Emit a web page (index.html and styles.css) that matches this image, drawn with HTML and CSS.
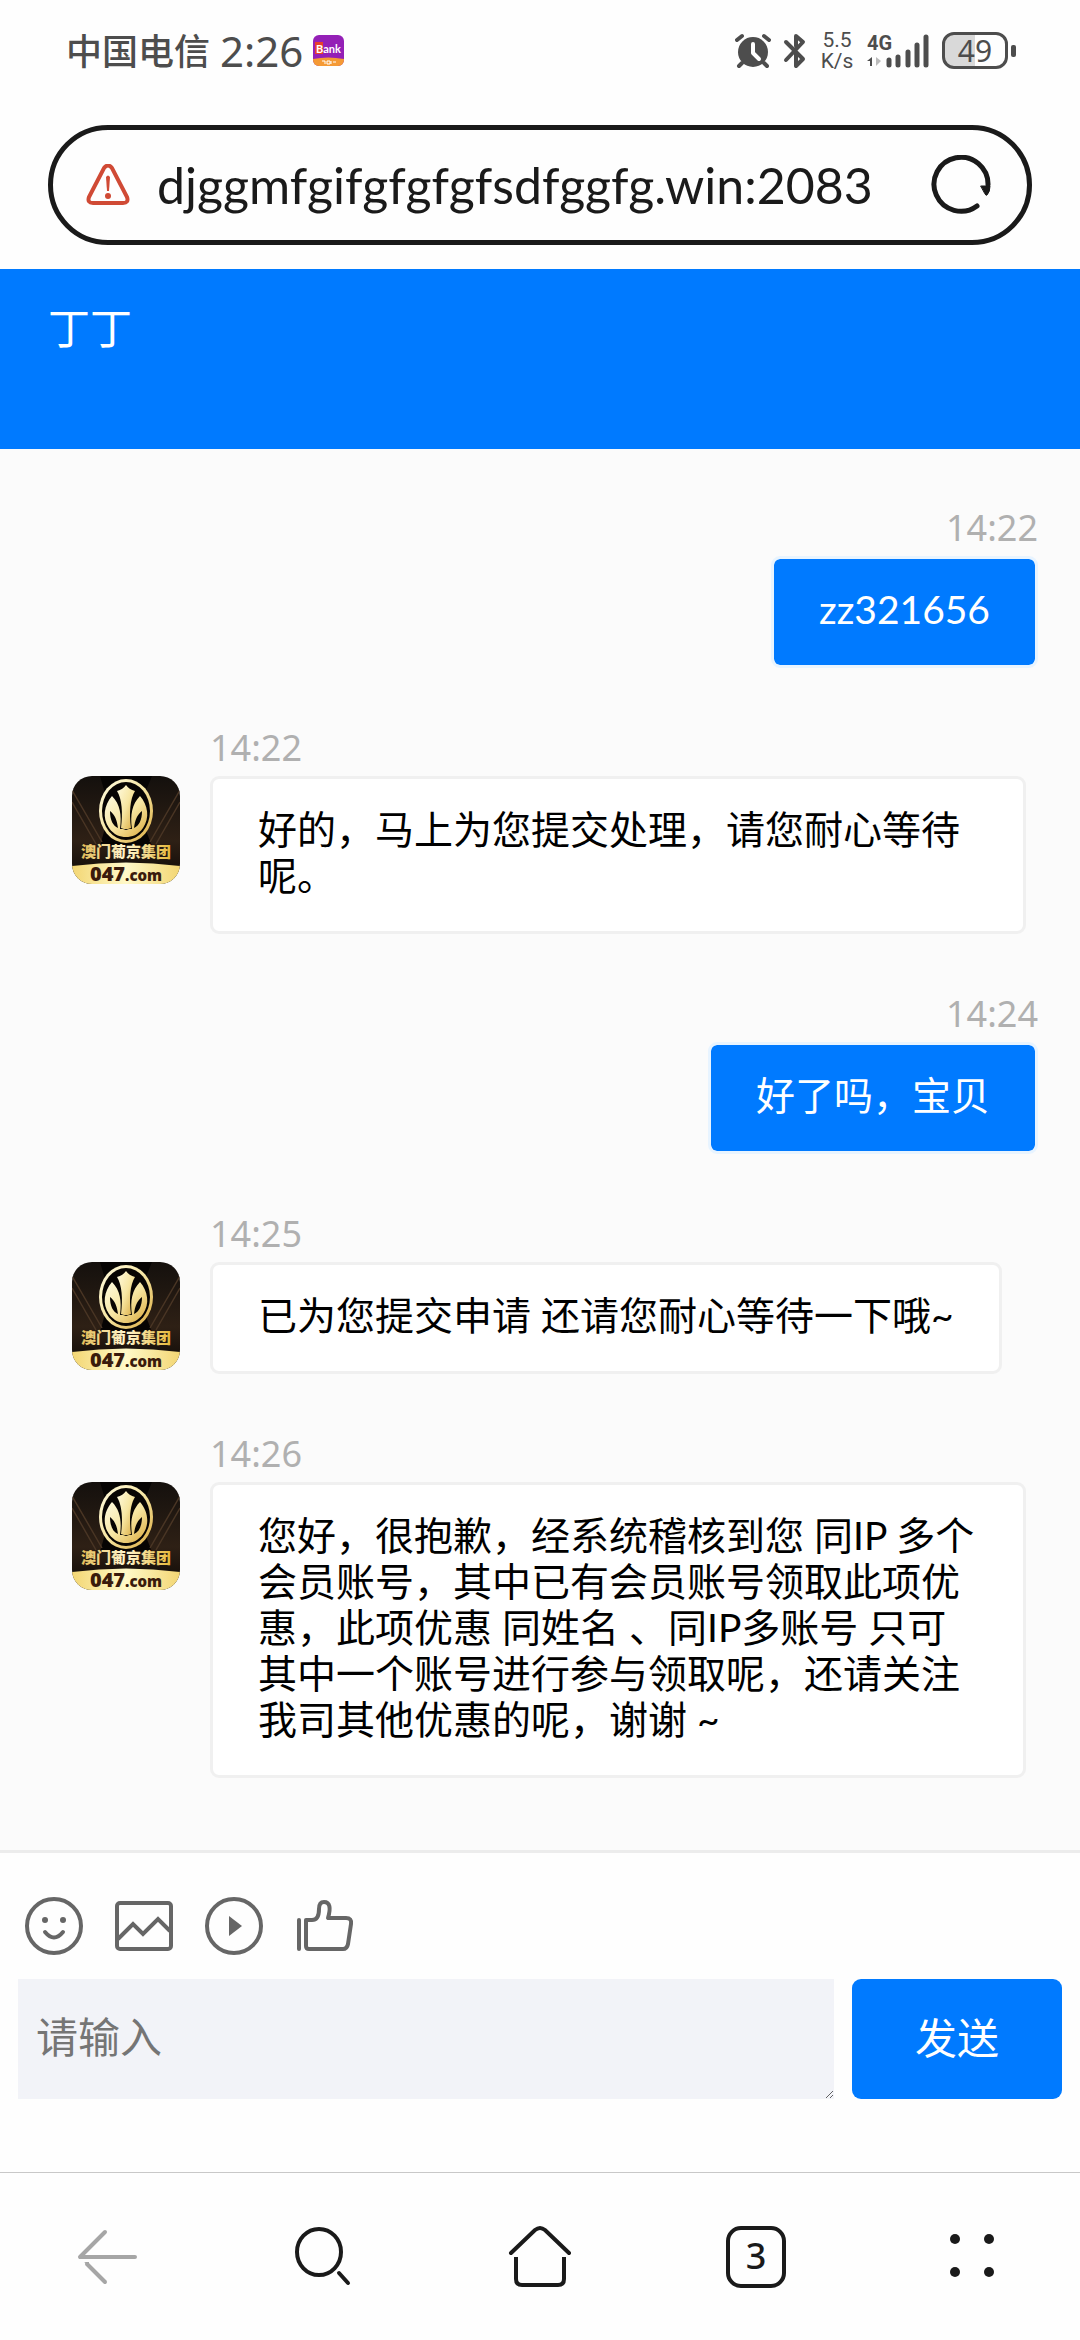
FILE: index.html
```html
<!DOCTYPE html>
<html lang="zh-CN">
  <head>
    <meta charset="UTF-8" />
    <meta name="viewport" content="width=device-width, initial-scale=1.0" />
    <title>丁丁</title>
    <link rel="stylesheet" href="styles.css" />
  </head>
  <body>
    <!-- shared avatar artwork -->
    <svg class="defs" width="0" height="0" aria-hidden="true">
      <defs>
        <linearGradient id="gold" x1="0" y1="0" x2="1" y2="1">
          <stop offset="0" stop-color="#fffbe0" />
          <stop offset="0.5" stop-color="#f7e6a2" />
          <stop offset="1" stop-color="#d9a83c" />
        </linearGradient>
        <linearGradient id="goldBand" x1="0" y1="0" x2="1" y2="0">
          <stop offset="0" stop-color="#f3d673" />
          <stop offset="0.5" stop-color="#fff9c9" />
          <stop offset="1" stop-color="#f3d673" />
        </linearGradient>
        <linearGradient id="goldText" x1="0" y1="0" x2="1" y2="0">
          <stop offset="0" stop-color="#e3bd58" />
          <stop offset="0.5" stop-color="#fff6cf" />
          <stop offset="1" stop-color="#e6b839" />
        </linearGradient>
        <linearGradient id="night" x1="0" y1="0" x2="0" y2="1">
          <stop offset="0" stop-color="#14100d" />
          <stop offset="0.6" stop-color="#2e2015" />
          <stop offset="1" stop-color="#0a0705" />
        </linearGradient>
      </defs>
      <symbol id="avatar" viewBox="0 0 108 108">
        <rect width="108" height="108" fill="url(#night)" />
        <path d="M28 0h52L66 34 80 70H28L38 34z" fill="#060403" />
        <path d="M0 14L30 66M0 26L24 68M108 14L78 66M108 26L84 68" stroke="#493524" stroke-width="1.5" />
        <ellipse cx="54" cy="35" rx="27" ry="32" fill="url(#gold)" />
        <ellipse cx="54" cy="35" rx="24" ry="29" fill="#080503" />
        <path d="M54 9c2 3 5 5 9 6-5 8-6 22-4 37l-3 1h-4l-3-1c2-15 1-29-4-37 4-1 7-3 9-6z" fill="url(#gold)" />
        <path d="M40 20c-8 9-10 22-3 32 5 7 11 9 17 9s12-2 17-9c7-10 5-23-3-32-8 8-10 19-8 33h-3l-3 1-3-1h-3c2-14 0-25-8-33z" fill="url(#gold)" />
        <path d="M38 35c0 9 3 15 8 17-1-8-3-13-8-17zM70 35c0 9-3 15-8 17 1-8 3-13 8-17z" fill="#080503" />
        <path d="M0 90q54-7 108 0v18H0z" fill="url(#goldBand)" />
      </symbol>
    </svg>

    <div class="status-bar">
      <div class="status-left">
        <span class="carrier">中国电信</span>
        <span class="clock">2:26</span>
        <svg width="31" height="31" viewBox="0 0 31 31">
          <defs>
            <clipPath id="appClip"><rect width="31" height="31" rx="6" /></clipPath>
          </defs>
          <g clip-path="url(#appClip)">
            <rect width="31" height="31" fill="#9420b6" />
            <path d="M0 24q15-3 31 0v7H0z" fill="#f59a35" />
            <path d="M2 7h8v12H2z" fill="#e8402c" />
            <text class="app-name" x="3" y="18" fill="#fff">Bank</text>
            <path d="M9 26h3v3M14 26h3v3h-3zM18 26v3M20 27h3" stroke="#fff" fill="none" />
          </g>
        </svg>
      </div>
      <div class="status-right">
        <svg width="36" height="36" viewBox="0 0 36 36" fill="#4d4d4d" stroke="#4d4d4d" stroke-linecap="round">
          <circle cx="18" cy="19" r="15" stroke="none" />
          <path d="M2 7l5-4M34 7l-5-4M7 30l-3 3M29 30l3 3" stroke-width="4" />
          <path d="M18 11v9l6 6" stroke="#fff" stroke-width="4" fill="none" stroke-linejoin="round" />
        </svg>
        <svg width="24" height="36" viewBox="0 0 24 36" fill="none" stroke="#4d4d4d" stroke-width="4" stroke-linecap="round" stroke-linejoin="round">
          <path d="M3 9l17 17-7 7V21M13 13V3l7 6L3 27" />
        </svg>
        <div class="net-speed"><span>5.5</span><span>K/s</span></div>
        <svg width="63" height="36" viewBox="0 0 63 36" stroke="#4d4d4d" stroke-width="5" stroke-linecap="round">
          <text class="net-type" x="0" y="17" fill="#4d4d4d" stroke="none">4G</text>
          <path d="M22 27v5M31 24v8M41 19v13M50 12v20M59 4v28" />
          <path d="M5 33v-9l-5 4h3v5z" fill="#4d4d4d" stroke="none" />
          <path d="M9 24v9l5-5z" fill="#bbb" stroke="none" />
        </svg>
        <div class="battery"><span class="battery-level">49</span></div>
      </div>
    </div>

    <div class="address-row">
      <div class="address-bar">
        <svg width="44" height="42" viewBox="0 0 44 42" fill="none" stroke="#d04a35" stroke-width="4">
          <path d="M18 4Q22-1 26 4L41 33q2 6-4 6H7q-6 0-4-6z" />
          <path d="M20 13q2-3 4 0l-1 14h-2z" fill="#d04a35" stroke="none" />
          <circle cx="22" cy="32" r="3" fill="#d04a35" stroke="none" />
        </svg>
        <input class="address-input" type="text" aria-label="网址" value="djggmfgifgfgfgfsdfggfg.win:2083" />
        <button class="icon-btn" type="button" aria-label="刷新">
          <svg width="60" height="60" viewBox="0 0 60 60" fill="none" stroke="#1a1a1a" stroke-width="5" stroke-linecap="round">
            <path d="M46 51A27 27 0 1 1 57 30" />
            <path d="M50 31h9q0 6-3 9-1 1-2-1z" fill="#1a1a1a" stroke-width="1" />
          </svg>
        </button>
      </div>
    </div>

    <header class="chat-header">
      <h1>丁丁</h1>
    </header>

    <main class="chat">
      <div class="message sent">
        <div class="message-body">
          <time>14:22</time>
          <div class="bubble">zz321656</div>
        </div>
      </div>
      <div class="message">
        <svg class="avatar" viewBox="0 0 108 108">
          <use href="#avatar" />
          <text class="avatar-name" x="54" y="81" text-anchor="middle">澳门葡京集团</text>
          <text class="avatar-site" x="54" y="105" text-anchor="middle">047<tspan class="avatar-tld">.com</tspan></text>
        </svg>
        <div class="message-body">
          <time>14:22</time>
          <div class="bubble">好的，马上为您提交处理，请您耐心等待呢。</div>
        </div>
      </div>
      <div class="message sent">
        <div class="message-body">
          <time>14:24</time>
          <div class="bubble">好了吗，宝贝</div>
        </div>
      </div>
      <div class="message">
        <svg class="avatar" viewBox="0 0 108 108">
          <use href="#avatar" />
          <text class="avatar-name" x="54" y="81" text-anchor="middle">澳门葡京集团</text>
          <text class="avatar-site" x="54" y="105" text-anchor="middle">047<tspan class="avatar-tld">.com</tspan></text>
        </svg>
        <div class="message-body">
          <time>14:25</time>
          <div class="bubble">已为您提交申请 还请您耐心等待一下哦~</div>
        </div>
      </div>
      <div class="message">
        <svg class="avatar" viewBox="0 0 108 108">
          <use href="#avatar" />
          <text class="avatar-name" x="54" y="81" text-anchor="middle">澳门葡京集团</text>
          <text class="avatar-site" x="54" y="105" text-anchor="middle">047<tspan class="avatar-tld">.com</tspan></text>
        </svg>
        <div class="message-body">
          <time>14:26</time>
          <div class="bubble">您好，很抱歉，经系统稽核到您 同IP 多个会员账号，其中已有会员账号领取此项优惠，此项优惠 同姓名 、同IP多账号 只可其中一个账号进行参与领取呢，还请关注我司其他优惠的呢，谢谢 ~</div>
        </div>
      </div>
    </main>

    <form class="composer" onsubmit="return false">
      <div class="tools">
        <button class="icon-btn" type="button" aria-label="表情">
          <svg width="60" height="60" viewBox="0 0 60 60" fill="none" stroke="#666" stroke-width="4" stroke-linecap="round">
            <circle cx="30" cy="30" r="27" />
            <path d="M21 36q9 11 18 0" />
            <circle cx="21" cy="24" r="3" fill="#666" stroke="none" />
            <circle cx="39" cy="24" r="3" fill="#666" stroke="none" />
          </svg>
        </button>
        <button class="icon-btn" type="button" aria-label="图片">
          <svg width="60" height="60" viewBox="0 0 60 60" fill="none" stroke="#666" stroke-width="4">
            <rect x="3" y="7" width="54" height="46" rx="3" />
            <path d="M4 43l15-15 10 10 15-15 12 12" />
          </svg>
        </button>
        <button class="icon-btn" type="button" aria-label="视频">
          <svg width="60" height="60" viewBox="0 0 60 60" fill="none" stroke="#666" stroke-width="4">
            <circle cx="30" cy="30" r="27" />
            <path d="M25 20l13 10-13 10z" fill="#666" stroke="none" />
          </svg>
        </button>
        <button class="icon-btn" type="button" aria-label="点赞">
          <svg width="60" height="60" viewBox="0 0 60 60" fill="none" stroke="#666" stroke-width="4" stroke-linecap="round" stroke-linejoin="round">
            <path d="M5 24v29" />
            <path d="M12 24h6c5 0 7-4 7-11 0-5 2-7 5-7 6 0 7 6 4 16h18q6 0 5 6l-3 20q-1 5-5 5H15q-3 0-3-3z" />
          </svg>
        </button>
      </div>
      <div class="input-row">
        <textarea class="message-input" aria-label="消息" placeholder="请输入" rows="1"></textarea>
        <button class="send-btn" type="submit">发送</button>
      </div>
    </form>

    <nav class="browser-nav">
      <button class="icon-btn" type="button" aria-label="后退">
        <svg width="66" height="66" viewBox="0 0 66 66" fill="none" stroke="#a6a6a6" stroke-width="4" stroke-linecap="round">
          <path d="M30 8L5 33h55" stroke-linejoin="round" />
          <path d="M9 38h5v3z" fill="#a6a6a6" stroke="none" />
          <path d="M12 40l18 18" />
        </svg>
      </button>
      <button class="icon-btn" type="button" aria-label="搜索">
        <svg width="66" height="66" viewBox="0 0 66 66" fill="none" stroke="#1a1a1a" stroke-width="4" stroke-linecap="round">
          <ellipse cx="28" cy="28" rx="22" ry="23" />
          <path d="M48 49l9 10" />
        </svg>
      </button>
      <button class="icon-btn" type="button" aria-label="主页">
        <svg width="66" height="66" viewBox="0 0 66 66" fill="none" stroke="#1a1a1a" stroke-width="4" stroke-linecap="round">
          <path d="M4 29L28 6q5-4 10 0l24 23" />
          <path d="M9 33v22q0 6 6 6h36q6 0 6-6V33" stroke-linecap="butt" />
        </svg>
      </button>
      <button class="icon-btn" type="button" aria-label="标签页">
        <span class="tab-count">3</span>
      </button>
      <button class="icon-btn" type="button" aria-label="菜单">
        <svg width="66" height="66" viewBox="0 0 66 66" fill="#1a1a1a">
          <circle cx="16" cy="15" r="5" />
          <circle cx="50" cy="15" r="5" />
          <circle cx="16" cy="48" r="5" />
          <circle cx="50" cy="48" r="5" />
        </svg>
      </button>
    </nav>
  </body>
</html>
```
FILE: styles.css
```css
* {
  box-sizing: border-box;
}
body {
  display: flex;
  flex-direction: column;
  min-height: 100vh;
  margin: 0;
  background: #fefefe;
  color: #000;
  font-family: Lato, "Noto Sans CJK SC", sans-serif;
  font-size: 39px;
  line-height: 46px;
}
svg {
  display: block;
  flex: none;
}
button,
input,
textarea {
  margin: 0;
  padding: 0;
  border: none;
  background: none;
  font-family: inherit;
}
.defs {
  position: absolute;
}
.icon-btn {
  display: flex;
  align-items: center;
  justify-content: center;
  color: #1a1a1a;
  cursor: pointer;
}

/* status bar */
.status-bar {
  display: flex;
  align-items: center;
  justify-content: space-between;
  height: 101px;
  padding: 0 64px 0 66px;
  color: #4d4d4d;
}
.status-left,
.status-right {
  display: flex;
  align-items: center;
}
.status-left {
  gap: 10px;
}
.status-right {
  gap: 12px;
}
.carrier {
  font-size: 36px;
  font-weight: 500;
}
.clock {
  font-family: "Noto Sans", sans-serif;
  font-size: 42px;
}
.app-name {
  font-size: 11px;
  font-weight: bold;
}
.net-speed {
  display: flex;
  flex-direction: column;
  align-items: center;
  width: 36px;
  font-family: Roboto, sans-serif;
  font-size: 21px;
  line-height: 21px;
}
.net-type {
  font-family: Roboto, sans-serif;
  font-size: 20px;
  font-weight: bold;
}
.battery {
  display: flex;
  align-items: center;
}
.battery::after {
  content: "";
  width: 5px;
  height: 12px;
  margin-left: 3px;
  border-radius: 2px;
  background: #4d4d4d;
}
.battery-level {
  width: 66px;
  height: 37px;
  border: 3px solid #4d4d4d;
  border-radius: 12px;
  background: linear-gradient(to right, #d9d9d9 50%, #fefefe 50%);
  font-family: "Noto Sans", sans-serif;
  font-size: 30px;
  line-height: 31px;
  text-align: center;
}

/* address bar */
.address-row {
  padding: 24px 48px;
}
.address-bar {
  display: flex;
  align-items: center;
  height: 120px;
  padding: 0 36px 0 33px;
  border: 5px solid #1a1a1a;
  border-radius: 60px;
}
.address-input {
  flex: 1;
  min-width: 0;
  margin: 0 24px 0 27px;
  color: #1a1a1a;
  font-size: 50px;
  line-height: 60px;
}

/* chat */
.chat-header {
  height: 180px;
  padding: 36px 48px;
  background: #007aff;
  color: #fff;
}
.chat-header h1 {
  margin: 0;
  font-size: 42px;
  font-weight: normal;
}
.chat {
  flex: 1;
  display: flex;
  flex-direction: column;
  gap: 57px;
  padding: 56px 42px 72px 72px;
  background: #fbfbfb;
}
.message {
  display: flex;
  align-items: flex-start;
  gap: 30px;
  padding-right: 12px;
}
.message.sent {
  justify-content: flex-end;
  padding-right: 0;
}
.message-body {
  display: flex;
  flex-direction: column;
  align-items: flex-start;
  gap: 5px;
}
.sent .message-body {
  align-items: flex-end;
}
.avatar {
  width: 108px;
  height: 108px;
  margin-top: 51px;
  border-radius: 20px;
}
.avatar-name {
  fill: url(#goldText);
  font-size: 15px;
  font-weight: 900;
}
.avatar-site {
  fill: #3a1b0c;
  font-family: "Open Sans", sans-serif;
  font-size: 20px;
  font-weight: 800;
}
.avatar-tld {
  font-size: 15px;
}
time {
  color: #b0b0b0;
  font-family: "Noto Sans", sans-serif;
  font-size: 36px;
}
.bubble {
  padding: 27px 45px 33px;
  border: 3px solid #f0f0f0;
  border-radius: 9px;
  background: #fff;
}
.sent .bubble {
  border-color: #e8f4ff;
  background: #007aff;
  background-clip: padding-box;
  color: #fff;
}

/* message box */
.composer {
  display: flex;
  flex-direction: column;
  gap: 23px;
  padding: 43px 18px 73px;
  border-top: 3px solid #ececec;
}
.tools {
  display: flex;
  gap: 30px;
  padding: 0 6px;
}
.input-row {
  display: flex;
  gap: 18px;
}
.message-input {
  flex: 1;
  height: 120px;
  padding: 33px 18px;
  background: #f2f3f8;
  font-size: 42px;
  line-height: 50px;
}
.message-input::placeholder {
  color: #757575;
}
.send-btn {
  width: 210px;
  padding-bottom: 8px;
  border-radius: 9px;
  background: #007aff;
  color: #fff;
  font-size: 42px;
  cursor: pointer;
}

/* bottom navigation */
.browser-nav {
  display: flex;
  height: 168px;
  border-top: 1px solid #c8c8c8;
}
.browser-nav .icon-btn {
  flex: 1;
}
.tab-count {
  width: 60px;
  height: 62px;
  border: 4px solid #1a1a1a;
  border-radius: 15px;
  font-family: "Noto Sans", sans-serif;
  font-size: 36px;
  font-weight: 500;
  line-height: 52px;
  text-align: center;
}
```
